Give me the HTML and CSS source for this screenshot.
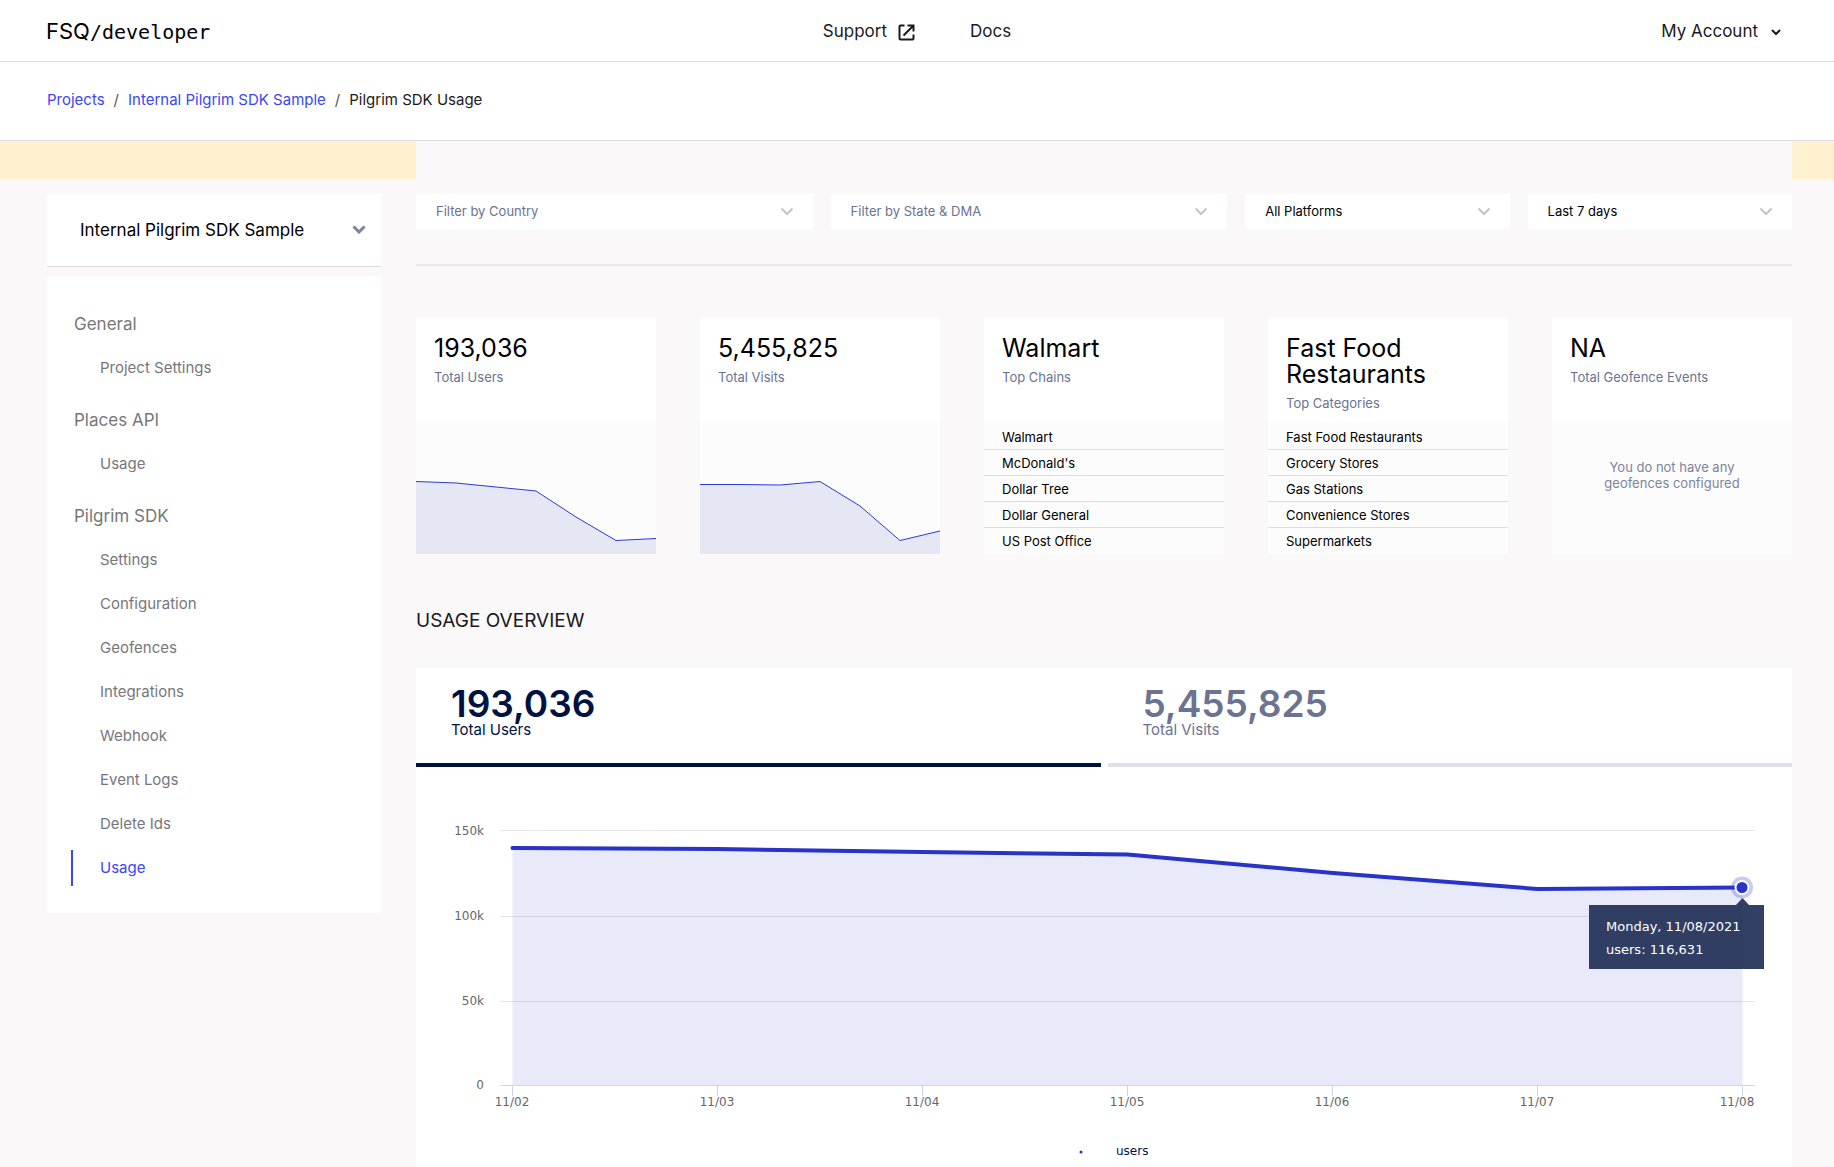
FILE: index.html
```html
<!DOCTYPE html>
<html lang="en">
<head>
  <meta charset="UTF-8">
  <meta name="viewport" content="width=device-width, initial-scale=1.0">
  <title>Pilgrim SDK Usage</title>
  <link rel="stylesheet" href="styles.css">
</head>
<body>
  <header class="topbar">
    <a class="logo" href="#"><span class="logo-mark">FSQ</span>/developer</a>
    <nav class="topnav">
      <a href="#">Support
        <svg class="icon-external" width="17" height="17" viewBox="0 0 17 17">
          <path d="M6.500 1.500H2.500a1 1 0 0 0-1 1v12a1 1 0 0 0 1 1h12a1 1 0 0 0 1-1v-4M9.500 1.500h6v6M15.500 1.500L5.500 11.500"/>
        </svg>
      </a>
      <a href="#">Docs</a>
    </nav>
    <button class="account" type="button">My Account
      <svg width="10" height="7" viewBox="0 0 10 7"><path d="M1 1l4 4 4-4"/></svg>
    </button>
  </header>

  <nav class="breadcrumb">
    <a href="#">Projects</a>
    <span class="slash">/</span>
    <a href="#">Internal Pilgrim SDK Sample</a>
    <span class="slash">/</span>
    <span>Pilgrim SDK Usage</span>
  </nav>

  <div class="notice"><div class="notice-gap"></div></div>

  <div class="layout">
    <aside class="sidebar">
      <div class="project-select">
        <select aria-label="Project">
          <option>Internal Pilgrim SDK Sample</option>
        </select>
        <svg class="chevron" width="14" height="9" viewBox="0 0 14 9"><path d="M1.500 1.500L7 7l5.500-5.500"/></svg>
      </div>
      <nav class="menu">
        <h2>General</h2>
        <ul>
          <li><a href="#">Project Settings</a></li>
        </ul>
        <h2>Places API</h2>
        <ul>
          <li><a href="#">Usage</a></li>
        </ul>
        <h2>Pilgrim SDK</h2>
        <ul>
          <li><a href="#">Settings</a></li>
          <li><a href="#">Configuration</a></li>
          <li><a href="#">Geofences</a></li>
          <li><a href="#">Integrations</a></li>
          <li><a href="#">Webhook</a></li>
          <li><a href="#">Event Logs</a></li>
          <li><a href="#">Delete Ids</a></li>
          <li><a class="active" href="#">Usage</a></li>
        </ul>
      </nav>
    </aside>

    <main class="content">
      <div class="filters">
        <div class="filter empty">
          <select aria-label="Country"><option>Filter by Country</option></select>
          <svg class="chevron" width="14" height="9" viewBox="0 0 14 9"><path d="M1.500 1.500L7 7l5.500-5.500"/></svg>
        </div>
        <div class="filter empty">
          <select aria-label="State and DMA"><option>Filter by State &amp; DMA</option></select>
          <svg class="chevron" width="14" height="9" viewBox="0 0 14 9"><path d="M1.500 1.500L7 7l5.500-5.500"/></svg>
        </div>
        <div class="filter">
          <select aria-label="Platform"><option>All Platforms</option></select>
          <svg class="chevron" width="14" height="9" viewBox="0 0 14 9"><path d="M1.500 1.500L7 7l5.500-5.500"/></svg>
        </div>
        <div class="filter">
          <select aria-label="Date range"><option>Last 7 days</option></select>
          <svg class="chevron" width="14" height="9" viewBox="0 0 14 9"><path d="M1.500 1.500L7 7l5.500-5.500"/></svg>
        </div>
      </div>

      <hr class="divider">

      <section class="cards">
        <div class="card">
          <div class="card-head">
            <div class="value">193,036</div>
            <div class="caption">Total Users</div>
          </div>
          <div class="card-body">
            <svg class="spark" viewBox="0 0 240 131" preserveAspectRatio="none">
              <path class="spark-area" d="M0 58.500L40 60L80 64L120 68L160 94L200 117.500L240 115.500V131H0Z"/>
              <path class="spark-line" d="M0 58.500L40 60L80 64L120 68L160 94L200 117.500L240 115.500"/>
            </svg>
          </div>
        </div>
        <div class="card">
          <div class="card-head">
            <div class="value">5,455,825</div>
            <div class="caption">Total Visits</div>
          </div>
          <div class="card-body">
            <svg class="spark" viewBox="0 0 240 131" preserveAspectRatio="none">
              <path class="spark-area" d="M0 61.500L40 61.500L80 62L120 58.500L160 83L200 117.500L240 108V131H0Z"/>
              <path class="spark-line" d="M0 61.500L40 61.500L80 62L120 58.500L160 83L200 117.500L240 108"/>
            </svg>
          </div>
        </div>
        <div class="card">
          <div class="card-head">
            <div class="value">Walmart</div>
            <div class="caption">Top Chains</div>
          </div>
          <ul class="card-body top-list">
            <li>Walmart</li>
            <li>McDonald's</li>
            <li>Dollar Tree</li>
            <li>Dollar General</li>
            <li>US Post Office</li>
          </ul>
        </div>
        <div class="card">
          <div class="card-head">
            <div class="value">Fast Food Restaurants</div>
            <div class="caption">Top Categories</div>
          </div>
          <ul class="card-body top-list">
            <li>Fast Food Restaurants</li>
            <li>Grocery Stores</li>
            <li>Gas Stations</li>
            <li>Convenience Stores</li>
            <li>Supermarkets</li>
          </ul>
        </div>
        <div class="card">
          <div class="card-head">
            <div class="value">NA</div>
            <div class="caption">Total Geofence Events</div>
          </div>
          <div class="card-body card-empty">You do not have any geofences configured</div>
        </div>
      </section>

      <h1 class="section-title">USAGE OVERVIEW</h1>

      <section class="overview">
        <div class="tabs">
          <button class="tab selected" type="button">
            <span class="tab-value">193,036</span>
            <span class="tab-label">Total Users</span>
          </button>
          <button class="tab" type="button">
            <span class="tab-value">5,455,825</span>
            <span class="tab-label">Total Visits</span>
          </button>
        </div>

        <svg class="chart" viewBox="0 0 1376 400" role="img" aria-label="Users per day">
          <g class="grid">
            <path d="M84 63.500H1339"/>
            <path d="M84 149.500H1339"/>
            <path d="M84 234.500H1339"/>
          </g>
          <path class="area" d="M96.500 81L301.500 82L506.500 85L711.500 87.500L917 106L1121.500 122L1326.500 120.500V319H96.500Z"/>
          <path class="axis" d="M84 318.500H1339M96.500 318v11M301.500 318v11M506.500 318v11M711.500 318v11M916.500 318v11M1121.500 318v11M1326.500 318v11"/>
          <path class="line" d="M96.500 81L301.500 82L506.500 85L711.500 87.500L917 106L1121.500 122L1326.500 120.500"/>
          <g class="y-labels">
            <text x="68" y="68">150k</text>
            <text x="68" y="153">100k</text>
            <text x="68" y="238">50k</text>
            <text x="68" y="322">0</text>
          </g>
          <g class="x-labels">
            <text x="96" y="339">11/02</text>
            <text x="301" y="339">11/03</text>
            <text x="506" y="339">11/04</text>
            <text x="711" y="339">11/05</text>
            <text x="916" y="339">11/06</text>
            <text x="1121" y="339">11/07</text>
            <text x="1321" y="339">11/08</text>
          </g>
          <circle class="halo" cx="1326" cy="120.500" r="11"/>
          <circle class="point" cx="1326" cy="120.500" r="6.500"/>
          <g class="tooltip">
            <path d="M1173 138H1320L1326.500 131L1333 138H1348V202H1173Z"/>
            <text x="1190" y="164">Monday, 11/08/2021</text>
            <text x="1190" y="187">users: 116,631</text>
          </g>
          <g class="legend">
            <circle cx="665" cy="385" r="1.500"/>
            <text x="700" y="388">users</text>
          </g>
        </svg>
      </section>
    </main>
  </div>
</body>
</html>
```

FILE: styles.css
```css
* {
  box-sizing: border-box;
}
body {
  margin: 0;
  background: #faf8f9;
  color: #1a1a1a;
  font-family: Inter, "Liberation Sans", sans-serif;
  font-size: 15px;
}
a {
  color: inherit;
  text-decoration: none;
}
ul {
  list-style: none;
  margin: 0;
  padding: 0;
}
button,
select {
  font: inherit;
  color: inherit;
  background: none;
  border: 0;
  border-radius: 0;
  padding: 0;
  appearance: none;
  cursor: pointer;
}
svg {
  display: block;
}

/* header */
.topbar {
  display: grid;
  grid-template-columns: 1fr auto 1fr;
  align-items: center;
  height: 62px;
  padding: 0 46px;
  background: #fff;
  border-bottom: 1px solid #dcdcde;
  font-size: 17px;
}
.logo {
  color: #000;
  font-family: "DejaVu Sans Mono", monospace;
  font-size: 20px;
}
.logo-mark {
  font-family: Inter, sans-serif;
  font-size: 22px;
}
.topnav {
  display: flex;
  gap: 55px;
}
.topnav a {
  display: flex;
  align-items: center;
  gap: 11px;
}
.topnav svg,
.account svg,
.chevron {
  fill: none;
  stroke: currentColor;
  stroke-width: 2;
}
.icon-external {
  margin-top: 3px;
}
.account {
  display: flex;
  align-items: center;
  justify-self: end;
  gap: 13px;
  margin-right: 7px;
}
.account svg {
  margin-top: 3px;
}

.breadcrumb {
  display: flex;
  align-items: center;
  gap: 9px;
  height: 79px;
  padding: 0 47px 3px;
  background: #fff;
  border-bottom: 1px solid #dcdcde;
}
.breadcrumb a {
  color: #3b46f5;
}
.slash {
  color: #555;
}

.notice {
  height: 38px;
  padding: 0 42px 0 416px;
  background: #fff2d0;
}
.notice-gap {
  height: 100%;
  background: #faf8f9;
}

.layout {
  display: flex;
  align-items: flex-start;
  gap: 35px;
  padding: 15px 42px 0 47px;
}

/* sidebar */
.sidebar {
  flex: none;
  width: 334px;
}
.project-select {
  position: relative;
  margin-bottom: 9px;
  background: #fff;
  border-bottom: 1px solid #dcdcde;
  color: #000;
}
.project-select select {
  width: 100%;
  height: 72px;
  padding: 0 48px 0 33px;
  font-size: 17px;
}
.chevron {
  position: absolute;
  top: 50%;
  right: 19px;
  margin-top: -5px;
  stroke-width: 2;
  pointer-events: none;
}
.project-select .chevron {
  right: 15px;
  color: #7a849e;
  stroke-width: 3;
}
.menu {
  padding: 36px 24px 27px;
  background: #fff;
  color: #77777a;
}
.menu h2 {
  margin: 22px 0 14px 3px;
  font-size: 17px;
  font-weight: 400;
  line-height: 24px;
}
.menu h2:first-child {
  margin-top: 0;
}
.menu li + li {
  margin-top: 8px;
}
.menu li a {
  display: block;
  padding-left: 27px;
  border-left: 2px solid transparent;
  line-height: 36px;
}
.menu li a.active {
  color: #3b46f5;
  border-color: #3b46f5;
}

/* filters */
.content {
  flex: 1;
  min-width: 0;
}
.filters {
  display: grid;
  grid-template-columns: 3fr 3fr 2fr 2fr;
  gap: 18px;
}
.filter {
  position: relative;
  background: #fff;
  color: #000;
  font-size: 13px;
}
.filter select {
  display: block;
  width: 100%;
  height: 35px;
  padding: 0 40px 1px 20px;
}
.filter.empty select {
  color: #6b7390;
}
.filter .chevron {
  color: #c4c4c4;
}
.divider {
  height: 2px;
  margin: 35px 0 51px;
  border: 0;
  background: #ebe9eb;
}

/* cards */
.cards {
  display: grid;
  grid-template-columns: repeat(5, 1fr);
  gap: 44px;
}
.card {
  background: #fff;
}
.card-head {
  height: 106px;
  padding: 18px 18px 0;
}
.value {
  color: #000;
  font-size: 25px;
  line-height: 26px;
}
.caption {
  margin-top: 7px;
  color: #6b7390;
  font-size: 13px;
  line-height: 18px;
}
.card-body {
  height: 131px;
  background: #fcfcfc;
  font-size: 13px;
}
.spark {
  width: 100%;
  height: 100%;
}
.spark-area {
  fill: #e5e7f5;
}
.spark-line {
  fill: none;
  stroke: #2d3ad0;
}
.top-list {
  padding-top: 1px;
  color: #000;
}
.top-list li {
  height: 26px;
  padding-left: 18px;
  border-bottom: 1px solid #dcdcde;
  line-height: 26px;
}
.top-list li:last-child {
  border-bottom: 0;
}
.card-empty {
  padding: 36px 40px 0;
  color: #7c849e;
  line-height: 16px;
  text-align: center;
}

.section-title {
  margin: 55px 0 35px;
  font-size: 19px;
  font-weight: 400;
  line-height: 24px;
}

/* usage overview */
.overview {
  background: #fff;
}
.tabs {
  display: grid;
  grid-template-columns: 1fr 1fr;
  gap: 7px;
}
.tab {
  display: flex;
  flex-direction: column;
  height: 99px;
  padding: 18px 35px 0;
  border-bottom: 4px solid #dfe0e7;
  color: #6b7390;
  text-align: left;
}
.tab.selected {
  color: #00123f;
  border-color: #00123f;
}
.tab-value {
  font-size: 37px;
  font-weight: 600;
  line-height: 36px;
}
.tab-label {
  line-height: 16px;
}

.chart {
  width: 100%;
  font-family: "DejaVu Sans", sans-serif;
  font-size: 12px;
}
.grid path {
  stroke: #e6e6e6;
}
.area {
  fill: #2833c7;
  fill-opacity: 0.1;
}
.axis {
  fill: none;
  stroke: #ccd6eb;
}
.line {
  fill: none;
  stroke: #2833c7;
  stroke-width: 4;
  stroke-linecap: round;
  stroke-linejoin: round;
}
.y-labels {
  fill: #666;
  text-anchor: end;
}
.x-labels {
  fill: #666;
  text-anchor: middle;
}
.halo {
  fill: #2833c7;
  fill-opacity: 0.25;
}
.point {
  fill: #2833c7;
  stroke: #fff;
  stroke-width: 2;
}
.tooltip path {
  fill: #1c2b52;
  fill-opacity: 0.9;
}
.tooltip text {
  fill: #fff;
  font-size: 13px;
}
.legend text {
  fill: #00123f;
}
.legend circle {
  fill: #2833c7;
}
```
